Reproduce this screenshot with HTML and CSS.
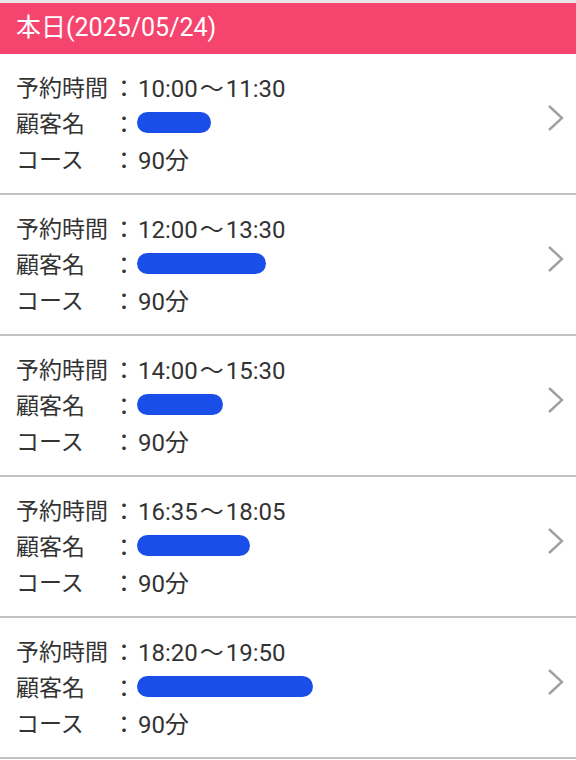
FILE: index.html
```html
<!DOCTYPE html>
<html lang="ja">
<head>
    <meta charset="UTF-8" />
    <meta name="viewport" content="width=device-width, initial-scale=1.0"/>
    <title>予約一覧</title>
    <link rel="stylesheet" href="styles.css">
</head>
<body>
    <div class="day-header">本日(2025/05/24)</div>
    <ul class="reserve-list">
        <li class="reserve-item">
            <div class="reserve-info">
                <div class="row"><span class="label">予約時間</span><span class="colon">：</span><span class="value">10:00<span class="wave">〜</span>11:30</span></div>
                <div class="row"><span class="label">顧客名</span><span class="colon">：</span><span class="mask" style="width:74px"></span></div>
                <div class="row"><span class="label">コース</span><span class="colon">：</span><span class="value">90分</span></div>
            </div>
            <svg class="chevron" viewBox="0 0 17 28"><path d="M2 2 L15 14 L2 26"/></svg>
        </li>
        <li class="reserve-item">
            <div class="reserve-info">
                <div class="row"><span class="label">予約時間</span><span class="colon">：</span><span class="value">12:00<span class="wave">〜</span>13:30</span></div>
                <div class="row"><span class="label">顧客名</span><span class="colon">：</span><span class="mask" style="width:129px"></span></div>
                <div class="row"><span class="label">コース</span><span class="colon">：</span><span class="value">90分</span></div>
            </div>
            <svg class="chevron" viewBox="0 0 17 28"><path d="M2 2 L15 14 L2 26"/></svg>
        </li>
        <li class="reserve-item">
            <div class="reserve-info">
                <div class="row"><span class="label">予約時間</span><span class="colon">：</span><span class="value">14:00<span class="wave">〜</span>15:30</span></div>
                <div class="row"><span class="label">顧客名</span><span class="colon">：</span><span class="mask" style="width:86px"></span></div>
                <div class="row"><span class="label">コース</span><span class="colon">：</span><span class="value">90分</span></div>
            </div>
            <svg class="chevron" viewBox="0 0 17 28"><path d="M2 2 L15 14 L2 26"/></svg>
        </li>
        <li class="reserve-item">
            <div class="reserve-info">
                <div class="row"><span class="label">予約時間</span><span class="colon">：</span><span class="value">16:35<span class="wave">〜</span>18:05</span></div>
                <div class="row"><span class="label">顧客名</span><span class="colon">：</span><span class="mask" style="width:113px"></span></div>
                <div class="row"><span class="label">コース</span><span class="colon">：</span><span class="value">90分</span></div>
            </div>
            <svg class="chevron" viewBox="0 0 17 28"><path d="M2 2 L15 14 L2 26"/></svg>
        </li>
        <li class="reserve-item">
            <div class="reserve-info">
                <div class="row"><span class="label">予約時間</span><span class="colon">：</span><span class="value">18:20<span class="wave">〜</span>19:50</span></div>
                <div class="row"><span class="label">顧客名</span><span class="colon">：</span><span class="mask" style="width:176px"></span></div>
                <div class="row"><span class="label">コース</span><span class="colon">：</span><span class="value">90分</span></div>
            </div>
            <svg class="chevron" viewBox="0 0 17 28"><path d="M2 2 L15 14 L2 26"/></svg>
        </li>
    </ul>
</body>
</html>
```

FILE: styles.css
```css
html,
body {
    margin: 0;
    background: #fff;
    font-family: Roboto, "Noto Sans CJK JP", sans-serif;
    color: #333;
}
body {
    border-top: 3px solid #e6e6e6;
}
.day-header {
    height: 51px;
    line-height: 50px;
    padding-left: 16px;
    background: #f5446e;
    color: #fff;
    font-size: 25px;
}
.reserve-list {
    list-style: none;
    margin: 0;
    padding: 0;
}
.reserve-item {
    display: flex;
    align-items: center;
    padding: 14px 12px 17px 16px;
    border-bottom: 2px solid #c2c2c2;
}
.reserve-info {
    flex: 1;
}
.row {
    display: flex;
    align-items: center;
    height: 36px;
    font-size: 24px;
}
.label {
    width: 96px;
    font-size: 23px;
}
.colon {
    width: 26px;
}
.wave {
    margin: 0 2px;
}
.mask {
    display: inline-block;
    height: 21px;
    margin-left: -1px;
    border-radius: 11px;
    background: #1a4ee8;
}
.chevron {
    width: 17px;
    height: 28px;
    margin-bottom: 8px;
    fill: none;
    stroke: #a0a0a0;
    stroke-width: 2.4;
}
```
